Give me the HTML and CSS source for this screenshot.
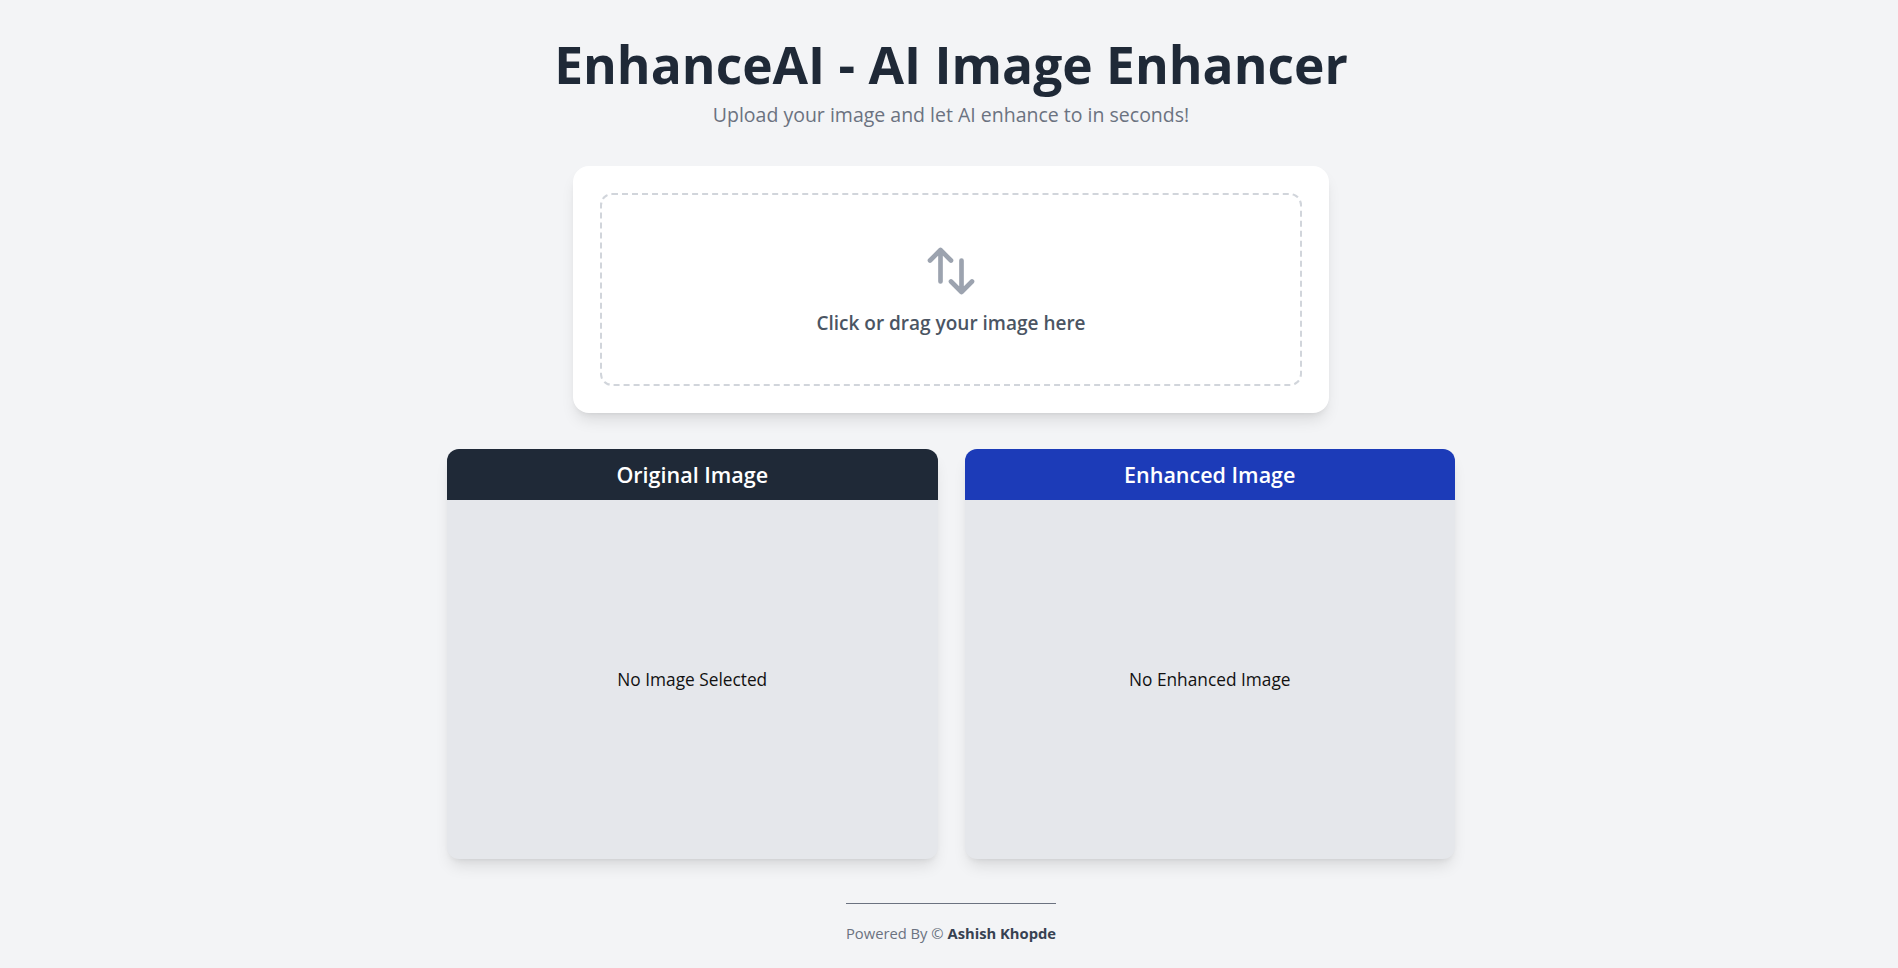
FILE: index.html
```html
<!DOCTYPE html>
<html lang="en">
<head>
<meta charset="utf-8">
<title>EnhanceAI - AI Image Enhancer</title>
<link rel="stylesheet" href="styles.css">
</head>
<body>
<main class="page">
  <header class="hero">
    <h1 class="title">EnhanceAI - AI Image Enhancer</h1>
    <p class="subtitle">Upload your image and let AI enhance to in seconds!</p>
  </header>

  <section class="upload-card">
    <label class="dropzone">
      <svg class="dropzone-icon" viewBox="0 0 24 24" fill="none" stroke="currentColor" stroke-width="2" stroke-linecap="round" stroke-linejoin="round" aria-hidden="true">
        <path d="M3 7.5 7.5 3m0 0L12 7.5M7.5 3v13.5m13.5 0L16.5 21m0 0L12 16.5m4.5 4.5V7.5"/>
      </svg>
      <span class="dropzone-text">Click or drag your image here</span>
    </label>
  </section>

  <section class="previews">
    <div class="panel">
      <div class="panel-head panel-head-dark">Original Image</div>
      <div class="panel-body">No Image Selected</div>
    </div>
    <div class="panel">
      <div class="panel-head panel-head-blue">Enhanced Image</div>
      <div class="panel-body">No Enhanced Image</div>
    </div>
  </section>

  <footer class="footer">
    <span class="footer-text">Powered By © <strong class="footer-name">Ashish Khopde</strong></span>
  </footer>
</main>
</body>
</html>
```

FILE: styles.css
```css
* { box-sizing: border-box; }

html, body {
  margin: 0;
  padding: 0;
}

body {
  background: #f3f4f6;
  font-family: "Open Sans", "Noto Sans", "Liberation Sans", sans-serif;
  color: #111827;
}

.page {
  display: flex;
  flex-direction: column;
  align-items: center;
  padding-top: 36px;
  padding-left: 4px;
}

.hero {
  text-align: center;
}

.title {
  margin: 0;
  font-size: 51.5px;
  line-height: 56px;
  font-weight: 700;
  color: #1f2937;
}

.subtitle {
  margin: 9px 0 0;
  font-size: 19.5px;
  line-height: 28px;
  color: #6b7280;
}

.upload-card {
  margin-top: 37px;
  width: 756px;
  background: #ffffff;
  border-radius: 16px;
  padding: 27px;
  box-shadow: 0 10px 15px -3px rgba(0,0,0,0.1), 0 4px 6px -4px rgba(0,0,0,0.1);
}

.dropzone {
  height: 193px;
  border: 2px dashed #d1d5db;
  border-radius: 12px;
  display: flex;
  flex-direction: column;
  align-items: center;
  justify-content: center;
  cursor: pointer;
}

.dropzone-icon {
  width: 56px;
  height: 56px;
  color: #9ca3af;
  margin-bottom: 10px;
}

.dropzone-text {
  font-size: 19px;
  line-height: 28px;
  font-weight: 600;
  color: #4b5563;
}

.previews {
  margin-top: 36px;
  width: 1008px;
  display: grid;
  grid-template-columns: 1fr 1fr;
  gap: 27px;
}

.panel {
  height: 410px;
  border-radius: 12px;
  overflow: hidden;
  background: #e5e7eb;
  display: flex;
  flex-direction: column;
  box-shadow: 0 10px 15px -3px rgba(0,0,0,0.1), 0 4px 6px -4px rgba(0,0,0,0.1);
}

.panel-head {
  height: 51px;
  display: flex;
  align-items: center;
  justify-content: center;
  color: #ffffff;
  font-size: 21.5px;
  font-weight: 600;
}

.panel-head-dark { background: #1f2937; }
.panel-head-blue { background: #1c3bb8; }

.panel-body {
  flex: 1;
  display: flex;
  align-items: center;
  justify-content: center;
  font-size: 17.3px;
  color: #111111;
}

.footer {
  margin-top: 44px;
}

.footer-text {
  display: inline-block;
  border-top: 1px solid #6b7280;
  padding-top: 17px;
  font-size: 14.75px;
  line-height: 24px;
  color: #6b7280;
}

.footer-name {
  font-weight: 700;
  color: #374151;
}
```
